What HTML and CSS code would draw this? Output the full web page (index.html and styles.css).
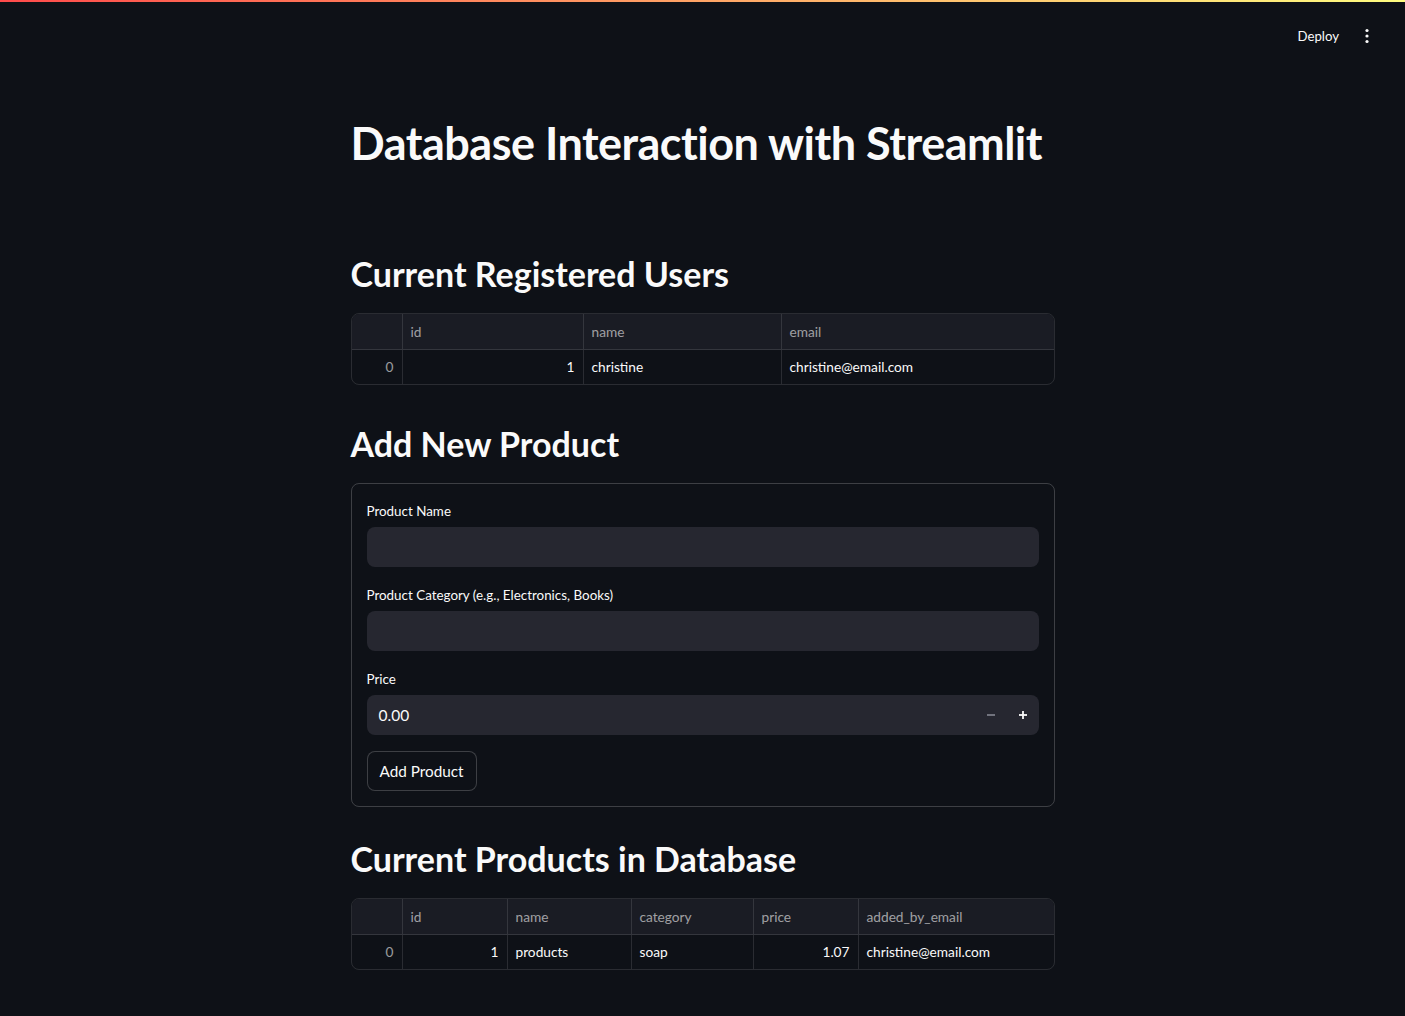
FILE: index.html
```html
<!DOCTYPE html>
<html lang="en">
<head>
<meta charset="utf-8">
<title>Database Interaction with Streamlit</title>
<link rel="stylesheet" href="styles.css">
</head>
<body>
<div class="topbar"></div>
<header class="header">
  <button class="deploy">Deploy</button>
  <button class="kebab" aria-label="Main menu">
    <svg width="16" height="16" viewBox="0 0 16 16"><circle cx="8" cy="2.5" r="1.6" fill="#fafafa"/><circle cx="8" cy="8" r="1.6" fill="#fafafa"/><circle cx="8" cy="13.5" r="1.6" fill="#fafafa"/></svg>
  </button>
</header>
<main class="main">
  <h1 class="title">Database Interaction with Streamlit</h1>

  <h2 class="heading h-users">Current Registered Users</h2>
  <div class="table users">
    <div class="cell head idx"></div>
    <div class="cell head">id</div>
    <div class="cell head">name</div>
    <div class="cell head">email</div>
    <div class="cell idx num">0</div>
    <div class="cell num">1</div>
    <div class="cell">christine</div>
    <div class="cell">christine@email.com</div>
  </div>

  <h2 class="heading h-add">Add New Product</h2>
  <form class="form">
    <label class="label">Product Name</label>
    <div class="input"></div>
    <label class="label">Product Category (e.g., Electronics, Books)</label>
    <div class="input"></div>
    <label class="label">Price</label>
    <div class="input number">
      <span class="value">0.00</span>
      <span class="step minus">
        <svg width="10" height="10" viewBox="0 0 10 10"><rect x="1" y="4.25" width="8" height="1.5" fill="#8b8d97"/></svg>
      </span>
      <span class="step plus">
        <svg width="10" height="10" viewBox="0 0 10 10"><rect x="1" y="4.1" width="8" height="1.8" fill="#fafafa"/><rect x="4.1" y="1" width="1.8" height="8" fill="#fafafa"/></svg>
      </span>
    </div>
    <button type="button" class="btn">Add Product</button>
  </form>

  <h2 class="heading h-products">Current Products in Database</h2>
  <div class="table products">
    <div class="cell head idx"></div>
    <div class="cell head">id</div>
    <div class="cell head">name</div>
    <div class="cell head">category</div>
    <div class="cell head">price</div>
    <div class="cell head">added_by_email</div>
    <div class="cell idx num">0</div>
    <div class="cell num">1</div>
    <div class="cell">products</div>
    <div class="cell">soap</div>
    <div class="cell num">1.07</div>
    <div class="cell">christine@email.com</div>
  </div>
</main>
</body>
</html>
```

FILE: styles.css
```css
* { box-sizing: border-box; }

html, body {
  margin: 0;
  padding: 0;
  background: #0e1117;
  color: #fafafa;
  font-family: Lato, "Noto Sans", sans-serif;
}

.topbar {
  height: 2px;
  background: linear-gradient(90deg, #ff4b4b, #fffd80);
}

.header {
  height: 68px;
  display: flex;
  justify-content: flex-end;
  align-items: center;
  padding-right: 22px;
  gap: 4px;
}

.deploy {
  background: transparent;
  border: none;
  color: #fafafa;
  font-family: inherit;
  font-size: 13.2px;
  padding: 6px 8px;
  cursor: pointer;
}

.kebab {
  width: 32px;
  height: 32px;
  display: flex;
  align-items: center;
  justify-content: center;
  background: transparent;
  border: none;
  padding: 0;
}

.main {
  width: 704px;
  margin: 0 auto;
  padding-bottom: 40px;
}

.title {
  margin: 45px 0 0;
  font-size: 45px;
  line-height: 56px;
  font-weight: 700;
  letter-spacing: -0.5px;
  white-space: nowrap;
}

.heading {
  margin: 0 0 17px;
  font-size: 34px;
  line-height: 44px;
  font-weight: 700;
}

.h-users { margin-top: 81px; }
.h-add { margin-top: 37px; }
.h-products { margin-top: 30px; }

.table {
  display: grid;
  border: 1px solid rgba(250, 250, 250, 0.12);
  border-radius: 8px;
  overflow: hidden;
  font-size: 13.7px;
}

.users { grid-template-columns: 50px 181px 198px 1fr; }
.products { grid-template-columns: 50px 105px 124px 122px 105px 1fr; }

.cell {
  display: flex;
  align-items: center;
  height: 34px;
  padding: 0 8px 2px;
  border-left: 1px solid rgba(250, 250, 250, 0.12);
  color: #fafafa;
  white-space: nowrap;
}

.cell.idx { border-left: none; color: rgba(250, 250, 250, 0.6); }
.cell.num { justify-content: flex-end; }

.cell.head {
  height: 36px;
  padding-bottom: 1px;
  background: #1a1c24;
  border-bottom: 1px solid rgba(250, 250, 250, 0.12);
  color: rgba(250, 250, 250, 0.6);
}

.form {
  display: flex;
  flex-direction: column;
  align-items: flex-start;
  border: 1px solid rgba(250, 250, 250, 0.2);
  border-radius: 8px;
  padding: 15px;
  margin: 0;
}

.label {
  font-size: 13.4px;
  line-height: 24px;
  margin-bottom: 4px;
}

.input {
  width: 100%;
  height: 40px;
  background: #262730;
  border-radius: 8px;
  margin-bottom: 16px;
}

.number {
  display: flex;
  align-items: center;
  padding-left: 12px;
}

.value {
  flex: 1;
  font-size: 15.5px;
}

.step {
  width: 32px;
  height: 40px;
  display: flex;
  align-items: center;
  justify-content: center;
}

.btn {
  height: 40px;
  padding: 0 12px;
  background: #0e1117;
  border: 1px solid rgba(250, 250, 250, 0.2);
  border-radius: 8px;
  color: #fafafa;
  font-family: inherit;
  font-size: 15.3px;
}
```
